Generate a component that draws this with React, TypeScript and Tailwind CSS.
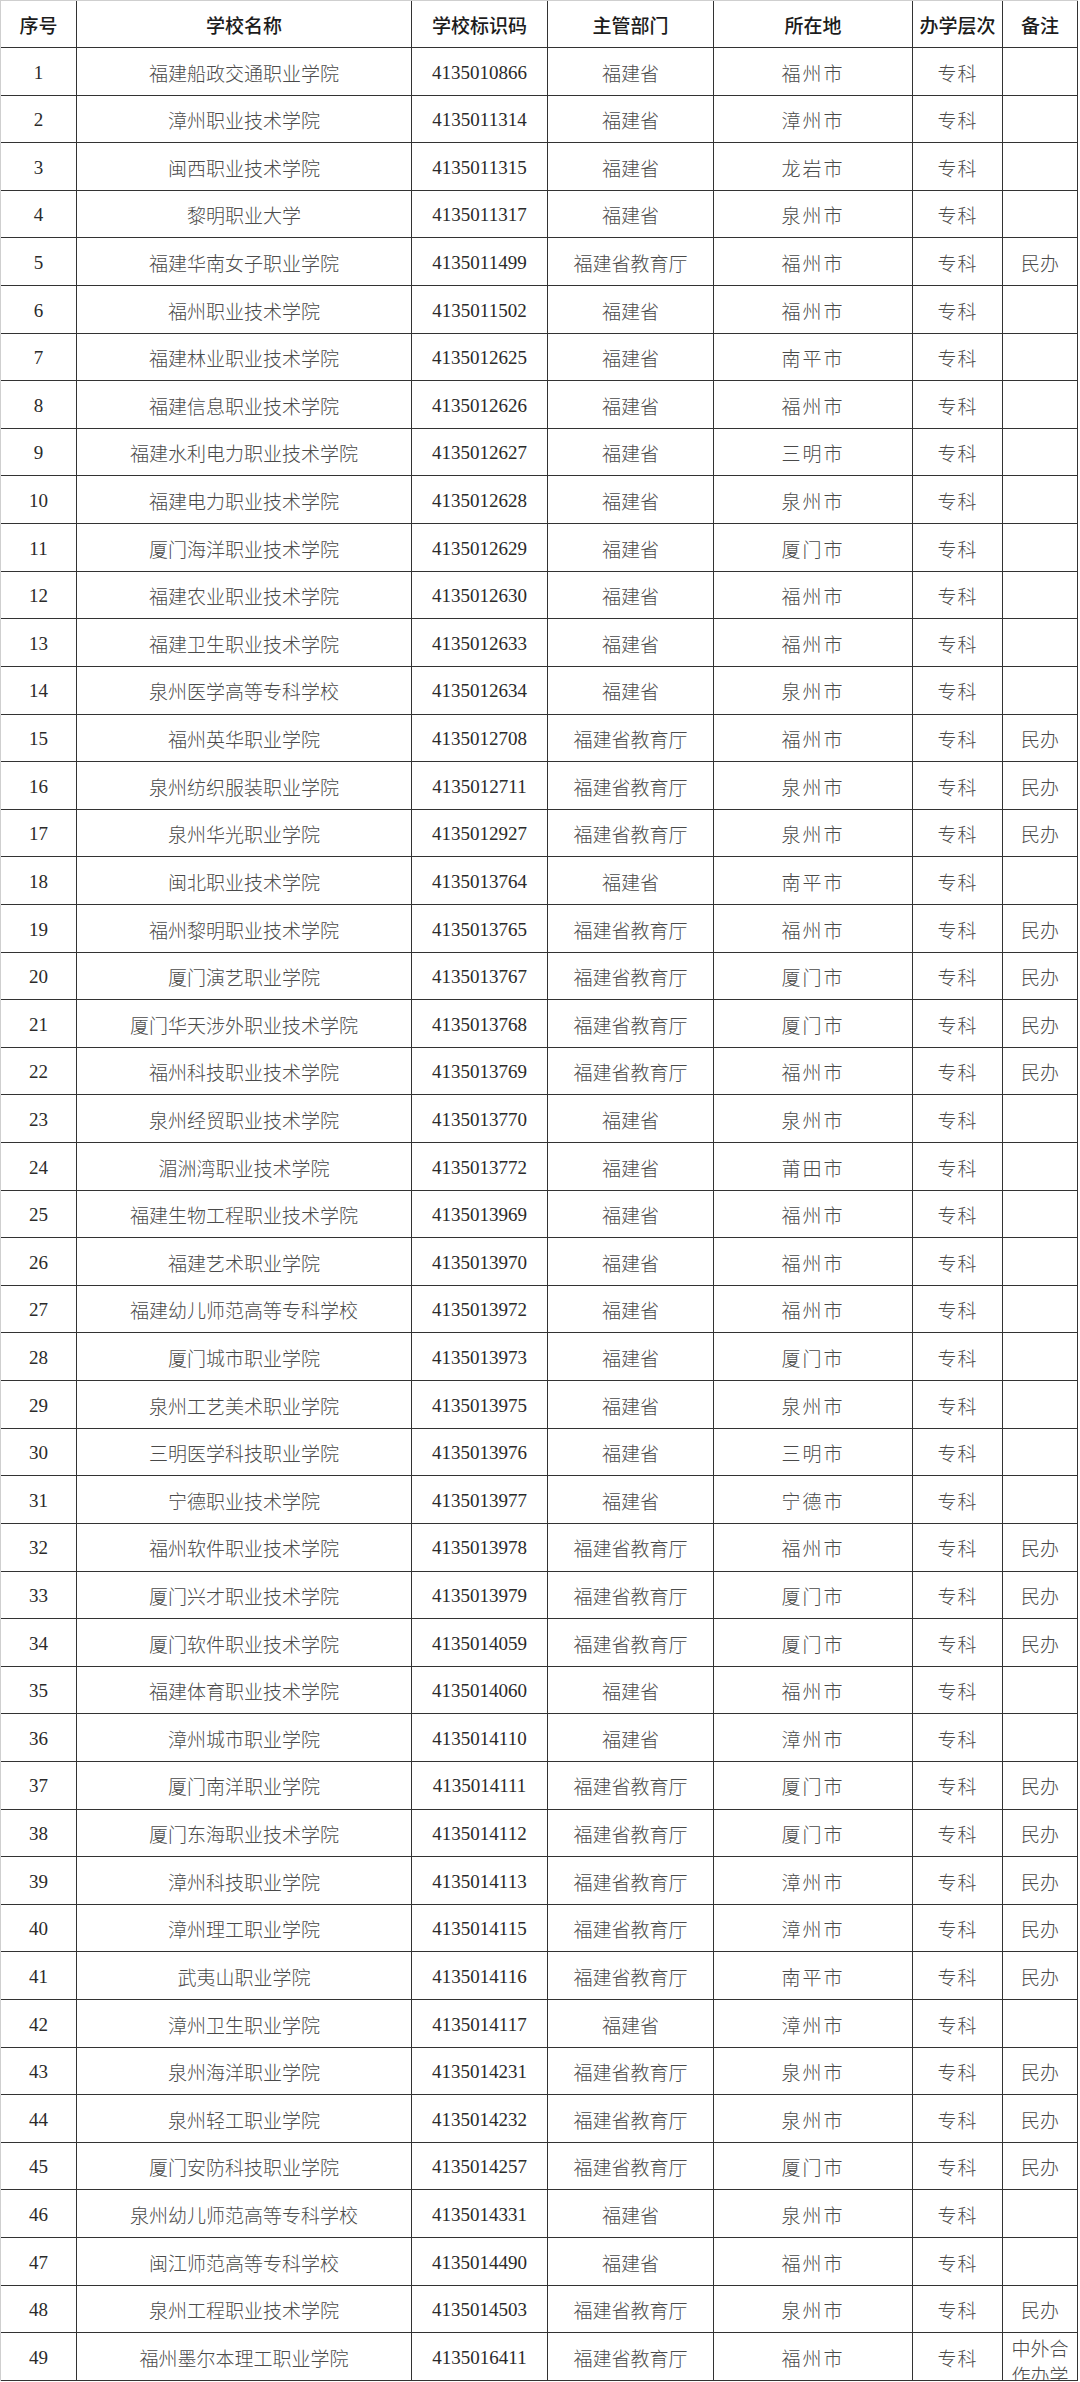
import React from "react";

type Row = [string, string, string, string, string];

const rows: Row[] = [
  ["福建船政交通职业学院", "4135010866", "福建省", "福州市", ""],
  ["漳州职业技术学院", "4135011314", "福建省", "漳州市", ""],
  ["闽西职业技术学院", "4135011315", "福建省", "龙岩市", ""],
  ["黎明职业大学", "4135011317", "福建省", "泉州市", ""],
  ["福建华南女子职业学院", "4135011499", "福建省教育厅", "福州市", "民办"],
  ["福州职业技术学院", "4135011502", "福建省", "福州市", ""],
  ["福建林业职业技术学院", "4135012625", "福建省", "南平市", ""],
  ["福建信息职业技术学院", "4135012626", "福建省", "福州市", ""],
  ["福建水利电力职业技术学院", "4135012627", "福建省", "三明市", ""],
  ["福建电力职业技术学院", "4135012628", "福建省", "泉州市", ""],
  ["厦门海洋职业技术学院", "4135012629", "福建省", "厦门市", ""],
  ["福建农业职业技术学院", "4135012630", "福建省", "福州市", ""],
  ["福建卫生职业技术学院", "4135012633", "福建省", "福州市", ""],
  ["泉州医学高等专科学校", "4135012634", "福建省", "泉州市", ""],
  ["福州英华职业学院", "4135012708", "福建省教育厅", "福州市", "民办"],
  ["泉州纺织服装职业学院", "4135012711", "福建省教育厅", "泉州市", "民办"],
  ["泉州华光职业学院", "4135012927", "福建省教育厅", "泉州市", "民办"],
  ["闽北职业技术学院", "4135013764", "福建省", "南平市", ""],
  ["福州黎明职业技术学院", "4135013765", "福建省教育厅", "福州市", "民办"],
  ["厦门演艺职业学院", "4135013767", "福建省教育厅", "厦门市", "民办"],
  ["厦门华天涉外职业技术学院", "4135013768", "福建省教育厅", "厦门市", "民办"],
  ["福州科技职业技术学院", "4135013769", "福建省教育厅", "福州市", "民办"],
  ["泉州经贸职业技术学院", "4135013770", "福建省", "泉州市", ""],
  ["湄洲湾职业技术学院", "4135013772", "福建省", "莆田市", ""],
  ["福建生物工程职业技术学院", "4135013969", "福建省", "福州市", ""],
  ["福建艺术职业学院", "4135013970", "福建省", "福州市", ""],
  ["福建幼儿师范高等专科学校", "4135013972", "福建省", "福州市", ""],
  ["厦门城市职业学院", "4135013973", "福建省", "厦门市", ""],
  ["泉州工艺美术职业学院", "4135013975", "福建省", "泉州市", ""],
  ["三明医学科技职业学院", "4135013976", "福建省", "三明市", ""],
  ["宁德职业技术学院", "4135013977", "福建省", "宁德市", ""],
  ["福州软件职业技术学院", "4135013978", "福建省教育厅", "福州市", "民办"],
  ["厦门兴才职业技术学院", "4135013979", "福建省教育厅", "厦门市", "民办"],
  ["厦门软件职业技术学院", "4135014059", "福建省教育厅", "厦门市", "民办"],
  ["福建体育职业技术学院", "4135014060", "福建省", "福州市", ""],
  ["漳州城市职业学院", "4135014110", "福建省", "漳州市", ""],
  ["厦门南洋职业学院", "4135014111", "福建省教育厅", "厦门市", "民办"],
  ["厦门东海职业技术学院", "4135014112", "福建省教育厅", "厦门市", "民办"],
  ["漳州科技职业学院", "4135014113", "福建省教育厅", "漳州市", "民办"],
  ["漳州理工职业学院", "4135014115", "福建省教育厅", "漳州市", "民办"],
  ["武夷山职业学院", "4135014116", "福建省教育厅", "南平市", "民办"],
  ["漳州卫生职业学院", "4135014117", "福建省", "漳州市", ""],
  ["泉州海洋职业学院", "4135014231", "福建省教育厅", "泉州市", "民办"],
  ["泉州轻工职业学院", "4135014232", "福建省教育厅", "泉州市", "民办"],
  ["厦门安防科技职业学院", "4135014257", "福建省教育厅", "厦门市", "民办"],
  ["泉州幼儿师范高等专科学校", "4135014331", "福建省", "泉州市", ""],
  ["闽江师范高等专科学校", "4135014490", "福建省", "福州市", ""],
  ["泉州工程职业技术学院", "4135014503", "福建省教育厅", "泉州市", "民办"],
  ["福州墨尔本理工职业学院", "4135016411", "福建省教育厅", "福州市", "中外合作办学"],
];

const serif = "font-['Liberation_Serif','Noto_Sans_CJK_SC',serif]";
const cjk = "font-['Noto_Sans_CJK_SC',sans-serif]";

const cell = "flex items-center justify-center border-r-[1.5px] border-[#333] h-full pt-[3px]";

export default function App() {
  return (
    <div className="w-[1080px] bg-white">
      <div className="w-[1078px] border-t border-l border-t-[#cfcfcf] border-l-[#cfcfcf]">
        <div className={`flex h-[47px] border-b-[1.5px] border-[#333] text-[19px] font-medium text-[#1c1c1c] ${cjk}`}>
          <div className={`${cell} w-[76px]`}>序号</div>
          <div className={`${cell} w-[335px]`}>学校名称</div>
          <div className={`${cell} w-[136px]`}>学校标识码</div>
          <div className={`${cell} w-[166px]`}>主管部门</div>
          <div className={`${cell} w-[199px]`}>所在地</div>
          <div className={`${cell} w-[90px]`}>办学层次</div>
          <div className={`${cell} w-[75px]`}>备注</div>
        </div>
        {rows.map((r, i) => {
          const last = r[4].length > 2;
          return (
            <div
              key={i}
              className="flex h-[47.61px] border-b-[1.5px] border-[#333] text-[19px]"
            >
              <div className={`${cell} w-[76px] ${serif} text-[#2a2a2a]`}>{i + 1}</div>
              <div className={`${cell} w-[335px] ${cjk} font-light text-[#4a4a4a]`}>{r[0]}</div>
              <div className={`${cell} w-[136px] ${serif} text-[#2a2a2a]`}>{r[1]}</div>
              <div className={`${cell} w-[166px] ${cjk} font-light text-[#4a4a4a]`}>{r[2]}</div>
              <div className={`${cell} w-[199px] ${cjk} font-light text-[#4a4a4a] tracking-[2px]`}>{r[3]}</div>
              <div className={`${cell} w-[90px] ${cjk} font-light text-[#4a4a4a] tracking-[1px]`}>专科</div>
              {last ? (
                <div className={`w-[75px] h-full overflow-hidden border-r-[1.5px] border-[#333] ${cjk} font-light text-[#4a4a4a] text-center leading-[27px] px-[8px] pt-[1px]`}>
                  {r[4]}
                </div>
              ) : (
                <div className={`${cell} w-[75px] ${cjk} font-light text-[#4a4a4a]`}>{r[4]}</div>
              )}
            </div>
          );
        })}
      </div>
    </div>
  );
}
